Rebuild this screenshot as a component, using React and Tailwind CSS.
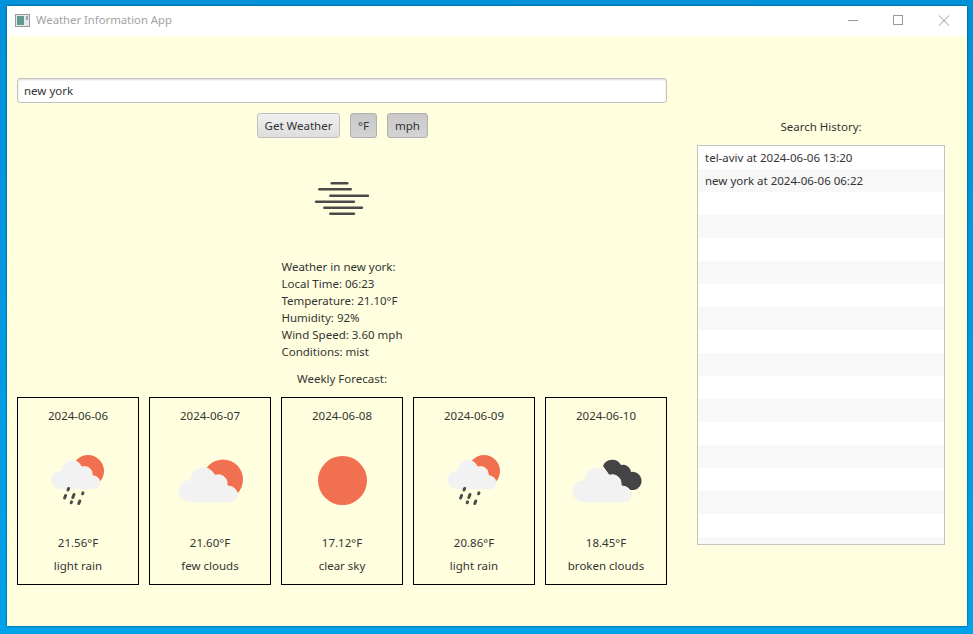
const FORECAST = [
  { date: '2024-06-06', temp: '21.56°F', desc: 'light rain', icon: 'rain' },
  { date: '2024-06-07', temp: '21.60°F', desc: 'few clouds', icon: 'few' },
  { date: '2024-06-08', temp: '17.12°F', desc: 'clear sky', icon: 'clear' },
  { date: '2024-06-09', temp: '20.86°F', desc: 'light rain', icon: 'rain' },
  { date: '2024-06-10', temp: '18.45°F', desc: 'broken clouds', icon: 'broken' }
];

const HISTORY = ['tel-aviv at 2024-06-06 13:20', 'new york at 2024-06-06 06:22'];
const ROW_COUNT = 18;

const MIST_LINES = [
  [25.3, 29.7, 45.3],
  [31.3, 17.3, 48.7],
  [37.7, 28.3, 66],
  [43.7, 14, 52],
  [49.7, 22.3, 60],
  [55.7, 28.3, 52]
];

function MistIcon() {
  return (
    <svg width="80" height="80" viewBox="0 0 80 80">
      {MIST_LINES.map(([y, x1, x2]) => (
        <line key={y} x1={x1} x2={x2} y1={y} y2={y} stroke="#4a4a4a" strokeWidth="2.4" strokeLinecap="round" />
      ))}
    </svg>
  );
}

function Cloud({ d, fill }) {
  return <path d={d} fill={fill} stroke="#fbfbee" strokeWidth="1" paintOrder="stroke" />;
}

function WeatherIcon({ type }) {
  if (type === 'clear') {
    return (
      <svg width="80" height="80" viewBox="0 0 80 80">
        <circle cx="40.5" cy="40.5" r="24.5" fill="#f1704f" />
      </svg>
    );
  }
  if (type === 'few') {
    return (
      <svg width="80" height="80" viewBox="0 0 80 80">
        <circle cx="53" cy="39.5" r="20" fill="#f1704f" />
        <Cloud
          fill="#f2f2f2"
          d="M19.5 62a11 11 0 0 1 -2 -21.8a2 2 0 0 0 3 -1a12.5 12.5 0 0 1 23.5 -5a2 2 0 0 0 2 1a8.5 8.5 0 0 1 11 9a2 2 0 0 0 2 2a9 9 0 0 1 8.5 9a7 7 0 0 1 -7 6.8z"
        />
      </svg>
    );
  }
  if (type === 'broken') {
    return (
      <svg width="80" height="80" viewBox="0 0 80 80">
        <path
          d="M37 26a10 10 0 0 1 18 -1a8 8 0 0 1 10 7a8.5 8.5 0 0 1 3 18h-14z"
          fill="#444446"
        />
        <Cloud
          fill="#f2f2f2"
          d="M17.5 62a11 11 0 0 1 -2 -21.8a2 2 0 0 0 3 -1a12.5 12.5 0 0 1 23.5 -5a2 2 0 0 0 2 1a8.5 8.5 0 0 1 11 9a2 2 0 0 0 2 2a9 9 0 0 1 8.5 9a7 7 0 0 1 -7 6.8z"
        />
      </svg>
    );
  }
  return (
    <svg width="80" height="80" viewBox="0 0 80 80">
      <circle cx="50" cy="31" r="16" fill="#f1704f" />
      <Cloud
        fill="#f2f2f2"
        d="M23 49a9 9 0 0 1 -1 -18a2 2 0 0 0 2 -1a10 10 0 0 1 19 -4a2 2 0 0 0 2 1a7 7 0 0 1 9 7a2 2 0 0 0 2 2a7 7 0 0 1 6 7a6 6 0 0 1 -6 6z"
      />
      <g stroke="#4a4a4a" strokeWidth="3" strokeLinecap="round">
        <line x1="30.6" y1="48.5" x2="30" y2="50" />
        <line x1="27.6" y1="55.5" x2="26.6" y2="58" />
        <line x1="36" y1="54.5" x2="34.8" y2="57.5" />
        <line x1="45" y1="52.8" x2="44.6" y2="53.8" />
        <line x1="33.6" y1="61.8" x2="33.2" y2="62.8" />
        <line x1="41.8" y1="61" x2="40.8" y2="63.5" />
      </g>
    </svg>
  );
}

function ForecastCard({ day }) {
  return (
    <div className="w-[122px] h-[188px] border border-black flex flex-col items-center">
      <div className="mt-[9px] h-[17px] leading-[17px]">{day.date}</div>
      <div className="mt-[16px]">
        <WeatherIcon type={day.icon} />
      </div>
      <div className="mt-[14px] h-[17px] leading-[17px]">{day.temp}</div>
      <div className="mt-[6px] h-[17px] leading-[17px]">{day.desc}</div>
    </div>
  );
}

function ToolButton({ children, pressed, width }) {
  const size = { get: 'w-[83px]', unit: 'w-[27px]', wind: 'w-[41px]' }[width];
  return (
    <button
      className={
        pressed
          ? `h-[25px] ${size} rounded-[3px] border border-[#b0b0b0] bg-gradient-to-b from-[#c8c8c8] to-[#d4d4d4] text-[#333]`
          : `h-[25px] ${size} rounded-[3px] border border-[#c0c0c0] bg-gradient-to-b from-[#f0f0f0] to-[#dedede] text-[#333]`
      }
    >
      {children}
    </button>
  );
}

export default function App() {
  return (
    <div
      className="w-[973px] h-[634px] overflow-hidden bg-gradient-to-b from-[#0092d9] to-[#00a2ea] pt-[6px] pl-[7px] text-[11.5px] text-[#333]"
      style={{ fontFamily: '"Noto Sans", "Open Sans", sans-serif' }}
    >
      <div className="w-[960px] h-[620px] flex flex-col bg-[#ffffdf] shadow-[0_0_2px_rgba(0,0,0,0.6)]">
        <div className="h-[30px] bg-white flex items-center shrink-0">
          <svg className="ml-[8px] mb-[2px]" width="15" height="13" viewBox="0 0 15 13">
            <rect x="0.5" y="0.5" width="14" height="12" fill="#e4e8ec" stroke="#9a9a9a" />
            <rect x="2" y="2" width="7" height="9" fill="#5f9a8c" />
            <rect x="11" y="2" width="2" height="4" fill="#8ea8bc" />
          </svg>
          <span className="ml-[6px] mb-[2px] text-[11.3px] text-[#a3a3a3]">Weather Information App</span>
          <div className="ml-auto flex items-center">
            <svg width="45" height="30" viewBox="0 0 45 30">
              <line x1="16" x2="26" y1="14.5" y2="14.5" stroke="#999" />
            </svg>
            <svg width="45" height="30" viewBox="0 0 45 30">
              <rect x="16.5" y="9.5" width="9" height="9" fill="none" stroke="#999" />
            </svg>
            <svg width="45" height="30" viewBox="0 0 45 30">
              <path d="M17 9.5l10 10M27 9.5l-10 10" stroke="#999" fill="none" />
            </svg>
          </div>
        </div>

        <div className="flex-1 flex pl-[10px]">
          <div className="w-[650px] flex flex-col">
            <input
              readOnly
              value="new york"
              className="mt-[42px] h-[25px] w-full rounded-[3px] border border-[#c2c2c2] bg-white px-[6px] shadow-[inset_0_1px_2px_rgba(0,0,0,0.15)] outline-none"
            />
            <div className="mt-[10px] flex justify-center gap-[10px] pl-[1px]">
              <ToolButton width="get">Get Weather</ToolButton>
              <ToolButton pressed width="unit">°F</ToolButton>
              <ToolButton pressed width="wind">mph</ToolButton>
            </div>
            <div className="mt-[20px] flex justify-center">
              <MistIcon />
            </div>
            <div className="mt-[20px] w-fit mx-auto leading-[17px]">
              <div>Weather in new york:</div>
              <div>Local Time: 06:23</div>
              <div>Temperature: 21.10°F</div>
              <div>Humidity: 92%</div>
              <div>Wind Speed: 3.60 mph</div>
              <div>Conditions: mist</div>
            </div>
            <div className="mt-[10px] text-center leading-[17px]">Weekly Forecast:</div>
            <div className="mt-[10px] flex justify-between">
              {FORECAST.map((day) => (
                <ForecastCard key={day.date} day={day} />
              ))}
            </div>
          </div>

          <div className="ml-[30px] w-[248px] flex flex-col">
            <div className="mt-[82px] h-[17px] leading-[17px] text-center">Search History:</div>
            <div className="mt-[10px] h-[400px] overflow-hidden border border-[#c4c4c4] bg-white">
              {Array.from({ length: ROW_COUNT }).map((_, i) => (
                <div
                  key={i}
                  className={i % 2 ? 'h-[23px] px-[7px] leading-[23px] bg-[#f8f8f8]' : 'h-[23px] px-[7px] leading-[23px] bg-white'}
                >
                  {HISTORY[i] || ''}
                </div>
              ))}
            </div>
          </div>
        </div>
      </div>
    </div>
  );
}
